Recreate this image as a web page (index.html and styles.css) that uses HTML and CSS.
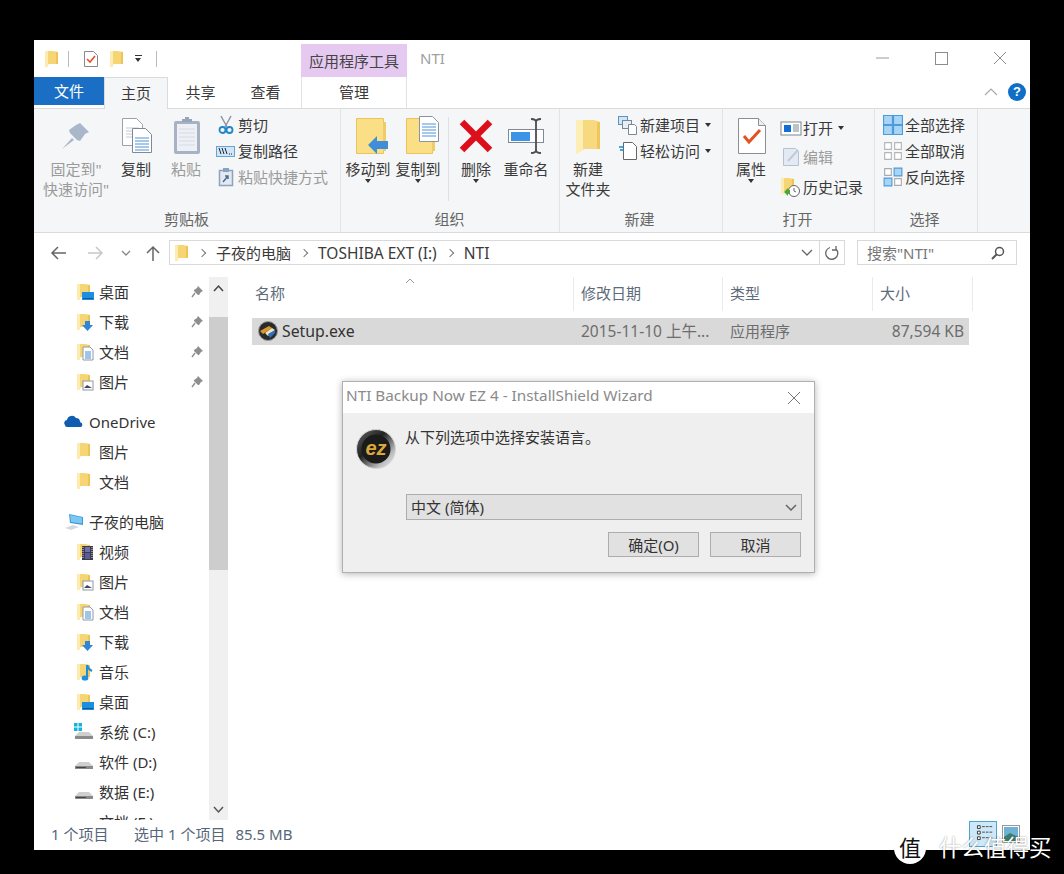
FILE: index.html
```html
<!DOCTYPE html>
<html lang="zh-CN">
<head>
<meta charset="utf-8">
<title>NTI</title>
<link rel="stylesheet" href="styles.css">
</head>
<body>
<svg class="defs" aria-hidden="true">
  <symbol id="fold" viewBox="0 0 13 18"><path d="M0 1h8l5 1v12H4l-4 3z" fill="#f6d674"/><path d="M0 1h3v16H0z" fill="#fdebb0"/><path d="M11 2h2v12h-2z" fill="#eec458"/></symbol>
  <symbol id="n-desk" viewBox="0 0 20 20"><use href="#fold" width="13" height="18" y="1"/><rect x="5" y="10" width="12" height="8" fill="#1d8fe1"/><rect x="6" y="16" width="10" height="1" fill="#0a5a98"/></symbol>
  <symbol id="n-down" viewBox="0 0 20 20"><use href="#fold" width="13" height="18" y="1"/><path d="M8 9h5v4h3l-5.500 6L5 13h3z" fill="#2f86d8"/></symbol>
  <symbol id="n-doc" viewBox="0 0 20 20"><use href="#fold" width="13" height="18" y="1"/><path d="M6 5h7l3 3v10H6z" fill="#fff" stroke="#8f99a6"/><path d="M8 10h6M8 12h6M8 14h6M8 16h6" stroke="#3f8bd0"/></symbol>
  <symbol id="n-pic" viewBox="0 0 20 20"><use href="#fold" width="13" height="18" y="1"/><rect x="6" y="9" width="10" height="9" fill="#fff" stroke="#8f99a6"/><path d="M7 16l3-3 5 3z" fill="#446"/></symbol>
  <symbol id="n-vid" viewBox="0 0 20 20"><use href="#fold" width="13" height="18" y="1"/><rect x="5" y="4" width="11" height="14" fill="#3b3b46"/><rect x="8" y="5" width="5" height="5" fill="#6f6fb0"/><rect x="8" y="11" width="5" height="6" fill="#5a5aa0"/><path d="M6 5v12M15 5v12" stroke="#ddd" stroke-dasharray="1 1"/></symbol>
  <symbol id="n-mus" viewBox="0 0 20 20"><use href="#fold" width="13" height="18" y="1"/><path d="M10 3v13" stroke="#1b8ee0" stroke-width="2"/><path d="M10 3q1 4 5 6" stroke="#1b8ee0" stroke-width="2" fill="none"/><ellipse cx="8" cy="16" rx="3.400" ry="2.600" fill="#1b8ee0"/></symbol>
  <symbol id="pin" viewBox="0 0 12 12"><path d="M7 0l5 5-2 1-2 3-1 0-4-4 0-1 3-2z" fill="#8e8e8e"/><path d="M1 11l3-4" stroke="#8e8e8e" stroke-width="1.400"/></symbol>
  <symbol id="drive" viewBox="0 0 20 20"><path d="M5 10h10l4 4v3H1v-3z" fill="#cfcfcf"/><path d="M1 14h18v3H1z" fill="#8a8a8a"/><path d="M2 15h10v1H2z" fill="#444"/></symbol>
</svg>

<div class="window">
  <header class="titlebar">
    <div class="qat">
      <svg class="qi"><use href="#fold"/></svg>
      <span class="qsep"></span>
      <svg class="qdoc" viewBox="0 0 14 16"><path d="M.5.5h9l4 4v11H.5z" fill="#fff" stroke="#888"/><path d="M3 8l3 3 5-6" fill="none" stroke="#e0502a" stroke-width="1.600"/></svg>
      <svg class="qi q2"><use href="#fold"/></svg>
      <span class="qdrop"></span>
      <span class="qsep q3"></span>
    </div>
    <div class="ctx-tab">应用程序工具</div>
    <div class="win-title">NTI</div>
    <div class="caption">
      <svg class="cap" viewBox="0 0 58 36"><path d="M21 18h13" stroke="#9a9a9a"/></svg>
      <svg class="cap" viewBox="0 0 58 36"><rect x="22.500" y="12.500" width="12" height="12" fill="none" stroke="#8c8c8c"/></svg>
      <svg class="cap" viewBox="0 0 58 36"><path d="M23 12l12 12M35 12L23 24" stroke="#8c8c8c"/></svg>
    </div>
  </header>

  <nav class="tabs">
    <div class="tab tab-file">文件</div>
    <div class="tab tab-home">主页</div>
    <div class="tab">共享</div>
    <div class="tab">查看</div>
    <div class="tab tab-manage">管理</div>
    <div class="tabs-right">
      <svg class="collapse" viewBox="0 0 14 8"><path d="M1 7l6-6 6 6" fill="none" stroke="#a8a8a8" stroke-width="1.200"/></svg>
      <div class="help">?</div>
    </div>
  </nav>

  <section class="ribbon">
    <div class="group g-clip">
      <div class="group-body">
        <div class="big wide dis">
          <svg class="big-icon" viewBox="0 0 44 42"><path d="M26 9l9 9-4 2-5 7-3-1-7-7-1-3 7-5z" fill="#aab7cb"/><path d="M8 35l10-11 2 2z" fill="#aab7cb"/></svg>
          <div class="lbl">固定到"<br>快速访问"</div>
        </div>
        <div class="big">
          <svg class="big-icon" viewBox="0 0 44 42"><path d="M8.500 4.500h14l6 6v21h-20z" fill="#fff" stroke="#9aa3ad"/><path d="M12 14h13M12 17h13M12 20h13M12 23h13" stroke="#c4cbd3"/><path d="M18.500 14.500h13l6 6v18h-19z" fill="#fff" stroke="#7f8a96"/><path d="M21 24h14M21 27h14M21 30h14M21 33h14M21 36h14" stroke="#4f94d4"/></svg>
          <div class="lbl">复制</div>
        </div>
        <div class="big dis">
          <svg class="big-icon" viewBox="0 0 44 42"><rect x="10" y="7" width="26" height="33" rx="2" fill="#a7b3c5"/><rect x="13" y="10" width="20" height="27" fill="#edf0f5"/><path d="M15 15h16M15 19h16M15 23h16M15 27h16M15 31h16" stroke="#d5dbe4"/><path d="M18 8h10V5h-3V3h-4v2h-3z" fill="#97a5ba"/></svg>
          <div class="lbl">粘贴</div>
        </div>
        <div class="smalls s-clip">
          <div class="sm"><svg class="si" viewBox="0 0 20 20"><path d="M5 1l6 11M15 1L9 12" stroke="#8a97a5" stroke-width="1.500"/><circle cx="6.500" cy="15" r="3" fill="none" stroke="#1f86c9" stroke-width="1.800"/><circle cx="13.500" cy="15" r="3" fill="none" stroke="#1f86c9" stroke-width="1.800"/></svg><span>剪切</span></div>
          <div class="sm"><svg class="si" viewBox="0 0 20 20"><rect x=".5" y="5.500" width="18" height="10" fill="#cfe6f8" stroke="#6aa3d0"/><path d="M3 7l2 6M6 7l2 6M9 7l2 6" stroke="#223" stroke-width="1"/><path d="M13 13h4" stroke="#223" stroke-dasharray="1 1"/></svg><span>复制路径</span></div>
          <div class="sm dis"><svg class="si" viewBox="0 0 20 20"><rect x="3.500" y="3.500" width="13" height="15" fill="#e4e9f0" stroke="#8ba3bf" stroke-width="1.500"/><rect x="7" y="1" width="6" height="4" fill="#8ba3bf"/><path d="M7 15l5-6M9 9h3v3" stroke="#4d6d93" stroke-width="1.500" fill="none"/></svg><span>粘贴快捷方式</span></div>
        </div>
      </div>
      <div class="group-lbl">剪贴板</div>
    </div>

    <div class="group g-org">
      <div class="group-body">
        <div class="big">
          <svg class="big-icon" viewBox="0 0 44 42"><path d="M10.500 4.500h27v35h-27z" fill="#fbdf87" stroke="#e9c45e"/><path d="M37 8h3v29h-3z" fill="#f0cc66"/><path d="M22 31l9-9v5h11v8H31v5z" fill="#3f8fd8"/></svg>
          <div class="lbl">移动到</div><span class="drop"></span>
        </div>
        <div class="big">
          <svg class="big-icon" viewBox="0 0 44 42"><path d="M10.500 4.500h26v35h-26z" fill="#fbdf87" stroke="#e9c45e"/><path d="M36 8h3v29h-3z" fill="#f0cc66"/><path d="M23.500 2.500h13l6 6v19h-19z" fill="#fff" stroke="#8a94a0"/><path d="M26 10h14M26 13h14M26 16h14M26 19h14M26 22h14" stroke="#4f94d4"/></svg>
          <div class="lbl">复制到</div><span class="drop"></span>
        </div>
        <span class="vsep"></span>
        <div class="big">
          <svg class="big-icon" viewBox="0 0 44 42"><path d="M8 8l28 28M36 8L8 36" stroke="#dd0f1b" stroke-width="6.500"/></svg>
          <div class="lbl">删除</div><span class="drop"></span>
        </div>
        <div class="big">
          <svg class="big-icon" viewBox="0 0 44 42"><rect x="4.500" y="15.500" width="35" height="13" fill="#fff" stroke="#7f8a96"/><rect x="7" y="18" width="19" height="9" fill="#3c94e6"/><path d="M32 7v30M27 5q5 0 5 3q0-3 5-3M27 39q5 0 5-3q0 3 5 3" fill="none" stroke="#4d4d4d" stroke-width="1.800"/></svg>
          <div class="lbl">重命名</div>
        </div>
      </div>
      <div class="group-lbl">组织</div>
    </div>

    <div class="group g-new">
      <div class="group-body">
        <div class="big">
          <svg class="big-icon" viewBox="0 0 44 42"><path d="M10 6h18l6 2v27H18l-8 5z" fill="#f7d97f"/><path d="M10 6h7v30l-7 4z" fill="#fdeeb6"/><path d="M31 8h3v27h-3z" fill="#eec65c"/></svg>
          <div class="lbl">新建<br>文件夹</div>
        </div>
        <div class="smalls s-new">
          <div class="sm"><svg class="si" viewBox="0 0 20 20"><rect x=".5" y="1.500" width="9" height="8" fill="#cfe6f8" stroke="#5d93bf"/><rect x="4.500" y="5.500" width="9" height="8" fill="#e8eef5" stroke="#7a8794"/><path d="M10.500 9.500h6l2 2v8h-8z" fill="#fff" stroke="#7a8794"/></svg><span>新建项目</span><span class="drop-i"></span></div>
          <div class="sm"><svg class="si" viewBox="0 0 20 20"><path d="M5.500 1.500h9l4 4v13h-13z" fill="#fff" stroke="#666"/><path d="M1 6h5M2 9h4" stroke="#1f86c9" stroke-width="1.400"/></svg><span>轻松访问</span><span class="drop-i"></span></div>
        </div>
      </div>
      <div class="group-lbl">新建</div>
    </div>

    <div class="group g-open">
      <div class="group-body">
        <div class="big">
          <svg class="big-icon" viewBox="0 0 44 42"><path d="M9.500 4.500h20l7 7v28h-27z" fill="#fff" stroke="#8a8f96"/><path d="M29.500 4.500v7h7" fill="#eee" stroke="#8a8f96"/><path d="M15 22l5 6 11-12" fill="none" stroke="#e2531f" stroke-width="3"/></svg>
          <div class="lbl">属性</div><span class="drop"></span>
        </div>
        <div class="smalls s-open">
          <div class="sm"><svg class="si w22" viewBox="0 0 22 20"><rect x="1" y="4" width="20" height="13" fill="#fff" stroke="#7a8794"/><rect x="4" y="7" width="7" height="7" fill="#0f6fd6"/><path d="M13 7h6M13 9h6M13 11h6M13 13h6" stroke="#7a8794"/></svg><span>打开</span><span class="drop-i"></span></div>
          <div class="sm dis"><svg class="si w22" viewBox="0 0 22 20"><path d="M3.500 1.500h12l3 3v14h-15z" fill="#e3eaf3" stroke="#b4c2d3"/><path d="M8 14L18 3" stroke="#c0cbd9" stroke-width="2"/></svg><span>编辑</span></div>
          <div class="sm"><svg class="si w22" viewBox="0 0 22 20"><use href="#fold" width="13" height="18" x="1"/><circle cx="14" cy="14" r="5.500" fill="#fff" stroke="#666"/><path d="M14 11v3l2 1" stroke="#666" fill="none"/><path d="M4 15l4-4v2h2v4H8v2z" fill="#4ca82e"/></svg><span>历史记录</span></div>
        </div>
      </div>
      <div class="group-lbl">打开</div>
    </div>

    <div class="group g-sel">
      <div class="group-body">
        <div class="smalls s-sel">
          <div class="sm"><svg class="si" viewBox="0 0 18 18"><path d="M0 0h18v18H0z" fill="#4f9ad8"/><path d="M1 1h7v7H1zM10 1h7v7h-7zM1 10h7v7H1zM10 10h7v7h-7z" fill="#a8d4f5"/></svg><span>全部选择</span></div>
          <div class="sm"><svg class="si" viewBox="0 0 18 18"><path d="M1.500 1.500h6v6h-6zM10.500 1.500h6v6h-6zM1.500 10.500h6v6h-6zM10.500 10.500h6v6h-6z" fill="#fff" stroke="#b5b5b5"/></svg><span>全部取消</span></div>
          <div class="sm"><svg class="si" viewBox="0 0 18 18"><path d="M1.500 1.500h6v6h-6zM10.500 10.500h6v6h-6z" fill="#fff" stroke="#aaa"/><path d="M10 1h7v7h-7zM1 10h7v7H1z" fill="#a8d4f5" stroke="#4f9ad8"/></svg><span>反向选择</span></div>
        </div>
      </div>
      <div class="group-lbl">选择</div>
    </div>
  </section>

  <div class="addrbar">
    <svg class="nav-b back" viewBox="0 0 16 14"><path d="M16 7H2M8 1L2 7l6 6" fill="none" stroke="#666" stroke-width="1.500"/></svg>
    <svg class="nav-b fwd" viewBox="0 0 16 14"><path d="M0 7h14M8 1l6 6-6 6" fill="none" stroke="#c8c8c8" stroke-width="1.500"/></svg>
    <svg class="nav-d" viewBox="0 0 10 6"><path d="M1 1l4 4 4-4" fill="none" stroke="#888" stroke-width="1.300"/></svg>
    <svg class="nav-u" viewBox="0 0 14 16"><path d="M7 16V2M1 8l6-6 6 6" fill="none" stroke="#666" stroke-width="1.500"/></svg>
    <div class="addr">
      <svg class="crumb-fold"><use href="#fold"/></svg>
      <span class="chev"></span><span class="crumb">子夜的电脑</span>
      <span class="chev"></span><span class="crumb latin">TOSHIBA EXT (I:)</span>
      <span class="chev"></span><span class="crumb latin">NTI</span>
      <svg class="addr-drop" viewBox="0 0 12 7"><path d="M1 1l5 5 5-5" fill="none" stroke="#666" stroke-width="1.300"/></svg>
      <div class="refresh"><svg viewBox="0 0 16 16"><path d="M6 2.500A6 6 0 1 0 12 4M12 1v4H8" fill="none" stroke="#666" stroke-width="1.300"/></svg></div>
    </div>
    <div class="search">
      <span>搜索"NTI"</span>
      <svg viewBox="0 0 14 14"><circle cx="8.500" cy="5.500" r="4" fill="none" stroke="#555" stroke-width="1.500"/><path d="M6 8l-5 5" stroke="#555" stroke-width="2"/></svg>
    </div>
  </div>

  <div class="main">
    <aside class="side">
      <div class="nav">
        <div class="row"><svg class="ni"><use href="#n-desk"/></svg><span>桌面</span><svg class="pin"><use href="#pin"/></svg></div>
        <div class="row"><svg class="ni"><use href="#n-down"/></svg><span>下载</span><svg class="pin"><use href="#pin"/></svg></div>
        <div class="row"><svg class="ni"><use href="#n-doc"/></svg><span>文档</span><svg class="pin"><use href="#pin"/></svg></div>
        <div class="row"><svg class="ni"><use href="#n-pic"/></svg><span>图片</span><svg class="pin"><use href="#pin"/></svg></div>
        <div class="row top root"><svg class="ri" viewBox="0 0 20 20"><path d="M1 13a3 3 0 0 1 2-5 5 5 0 0 1 9-2 4 4 0 0 1 4 4 3 3 0 0 1 2 4 2 2 0 0 1-2 1H3a2 2 0 0 1-2-2z" fill="#0f5cb0"/></svg><span>OneDrive</span></div>
        <div class="row"><svg class="ni"><use href="#fold" width="13" height="18"/></svg><span>图片</span></div>
        <div class="row"><svg class="ni"><use href="#fold" width="13" height="18"/></svg><span>文档</span></div>
        <div class="row top root"><svg class="ri" viewBox="0 0 20 20"><path d="M5 2l14 3v8L6 11z" fill="#3a9bd9"/><path d="M6 3l12 2.500v6L7 10z" fill="#7cc6f2"/><path d="M1 16l8-3 6 2-8 3z" fill="#d5d8dc"/></svg><span>子夜的电脑</span></div>
        <div class="row"><svg class="ni"><use href="#n-vid"/></svg><span>视频</span></div>
        <div class="row"><svg class="ni"><use href="#n-pic"/></svg><span>图片</span></div>
        <div class="row"><svg class="ni"><use href="#n-doc"/></svg><span>文档</span></div>
        <div class="row"><svg class="ni"><use href="#n-down"/></svg><span>下载</span></div>
        <div class="row"><svg class="ni"><use href="#n-mus"/></svg><span>音乐</span></div>
        <div class="row"><svg class="ni"><use href="#n-desk"/></svg><span>桌面</span></div>
        <div class="row drv"><svg class="di" viewBox="0 0 20 20"><path d="M5 10h10l4 4v3H1v-3z" fill="#cfcfcf"/><path d="M1 14h18v3H1z" fill="#8a8a8a"/><path d="M0 1h3.500v3.500H0zM4.500 1H8v3.500H4.500zM0 5.500h3.500V9H0zM4.500 5.500H8V9H4.500z" fill="#12b3dd"/></svg><span>系统 (C:)</span></div>
        <div class="row drv"><svg class="di"><use href="#drive"/></svg><span>软件 (D:)</span></div>
        <div class="row drv"><svg class="di"><use href="#drive"/></svg><span>数据 (E:)</span></div>
        <div class="row drv"><svg class="di"><use href="#drive"/></svg><span>文档 (F:)</span></div>
      </div>
      <div class="vscroll">
        <svg class="sb-btn" viewBox="0 0 19 40"><path d="M5 14l4.500-5 4.500 5" fill="none" stroke="#444" stroke-width="1.500"/></svg>
        <div class="thumb"></div>
        <svg class="sb-btn2" viewBox="0 0 19 24"><path d="M5 11l4.500 5 4.500-5" fill="none" stroke="#555" stroke-width="1.500"/></svg>
      </div>
    </aside>
    <section class="list">
      <div class="cols">
        <div class="col c-name">名称<svg class="sort" viewBox="0 0 10 6"><path d="M1 5l4-4 4 4" fill="none" stroke="#999"/></svg></div>
        <div class="col c-date">修改日期</div>
        <div class="col c-type">类型</div>
        <div class="col c-size">大小</div>
      </div>
      <div class="file">
        <div class="f-name">
          <svg class="f-icon" viewBox="0 0 20 20"><circle cx="10" cy="10" r="9.500" fill="#2a2a2a" stroke="#999"/><path d="M2 10l9-5 3 2-9 6z" fill="#d79a2b"/><path d="M7 12l7-5 3 2-7 6z" fill="#f1e3c0"/><path d="M10 13l7-4v3l-5 5z" fill="#2c6fc0"/></svg>
          <span class="latin-f">Setup.exe</span>
        </div>
        <div class="f-date">2015-11-10 上午...</div>
        <div class="f-type">应用程序</div>
        <div class="f-size">87,594 KB</div>
      </div>
    </section>
  </div>

  <footer class="status">
    <span class="st1">1 个项目</span>
    <span class="st2">选中 1 个项目</span>
    <span class="st3">85.5 MB</span>
    <div class="views">
      <div class="v-det"><svg viewBox="0 0 28 26"><path d="M8 4h3v3H8zM8 10h3v3H8zM8 16h3v3H8z" fill="#fff" stroke="#333"/><path d="M13 5h11M13 11h11M13 17h11" stroke="#444" stroke-dasharray="3 1"/></svg></div>
      <svg class="v-lrg" viewBox="0 0 18 18"><rect x=".5" y=".5" width="17" height="17" fill="#fff" stroke="#999"/><rect x="2" y="2" width="14" height="14" fill="#6fb2d8"/><path d="M2 12l6-4 8 4v4H2z" fill="#3d7f6a"/></svg>
    </div>
  </footer>
</div>

<div class="dialog">
  <div class="dlg-title">
    <span>NTI Backup Now EZ 4 - InstallShield Wizard</span>
    <svg viewBox="0 0 12 12"><path d="M0 0l12 12M12 0L0 12" stroke="#777"/></svg>
  </div>
  <div class="dlg-body">
    <div class="dlg-msg">
      <svg class="ez" viewBox="0 0 40 40">
        <defs><linearGradient id="ring" x1="0" y1="0" x2="1" y2="1"><stop offset="0" stop-color="#666"/><stop offset=".4" stop-color="#222"/><stop offset=".75" stop-color="#bbb"/><stop offset="1" stop-color="#f2f2f2"/></linearGradient></defs>
        <circle cx="20" cy="20" r="19.500" fill="url(#ring)" stroke="#d5d5d5"/>
        <circle cx="20" cy="20" r="14.500" fill="#1b1b1b"/>
        <text x="20" y="26" class="ez-t">ez</text>
      </svg>
      <p>从下列选项中选择安装语言。</p>
    </div>
    <div class="dlg-select">
      <span>中文 (简体)</span>
      <svg viewBox="0 0 12 7"><path d="M1 1l5 5 5-5" fill="none" stroke="#666" stroke-width="1.500"/></svg>
    </div>
    <div class="dlg-btns">
      <div class="btn">确定(O)</div>
      <div class="btn">取消</div>
    </div>
  </div>
</div>

<div class="wm">
  <div class="wm-c">值</div>
  <div class="wm-t">什么值得买</div>
</div>
</body>
</html>
```

FILE: styles.css
```css
* { box-sizing: border-box; }
html, body { margin: 0; height: 874px; overflow: hidden; background: #000; }
body { font: 15px/20px "Noto Sans", "Noto Sans CJK SC", sans-serif; color: #3a3a3a; position: relative; }
.defs { position: absolute; width: 0; height: 0; }

.window { width: 996px; height: 810px; margin: 40px 0 0 34px; background: #fff; display: flex; flex-direction: column; overflow: hidden; }

/* title bar */
.titlebar { height: 37px; display: flex; flex: none; }
.qat { width: 267px; display: flex; align-items: center; padding: 0 0 0 11px; }
.qi { width: 13px; height: 18px; }
.q2 { margin-left: 12px; }
.qsep { width: 1px; height: 16px; background: #bbb; margin-left: 10px; }
.q3 { margin-left: 14px; }
.qdoc { width: 14px; height: 16px; margin-left: 15px; }
.qdrop { width: 7px; height: 7px; margin-left: 12px; border-top: 1px solid #333; position: relative; }
.qdrop::after { content: ""; position: absolute; left: 0; top: 2px; border: 3.5px solid transparent; border-top: 4px solid #333; border-bottom: 0; }
.ctx-tab { width: 106px; margin-top: 4px; background: #e5c9f1; text-align: center; line-height: 34px; color: #444; }
.win-title { margin-left: 13px; line-height: 36px; color: #a0a0a0; font-size: 15px; }
.caption { margin-left: auto; display: flex; padding-right: 1px; }
.cap { width: 58px; height: 36px; }

/* tabs */
.tabs { height: 32px; flex: none; display: flex; border-bottom: 1px solid #dadbdc; }
.tab { width: 65px; text-align: center; line-height: 30px; }
.tab-file { width: 70px; height: 28px; line-height: 28px; background: #1a6fc4; color: #fff; }
.tab-home { width: 64px; height: 32px; background: #f5f6f7; border: 1px solid #dadbdc; border-bottom: 0; }
.tab-manage { width: 106px; margin-left: 3px; border-left: 1px solid #e2e2e2; border-right: 1px solid #e2e2e2; }
.tabs-right { margin-left: auto; display: flex; align-items: center; padding: 0 4px 2px 0; }
.collapse { width: 14px; height: 8px; margin-right: 10px; }
.help { width: 18px; height: 18px; border-radius: 50%; background: #0f6fc6; color: #fff; font: bold 13px/18px "Liberation Sans", sans-serif; text-align: center; }

/* ribbon */
.ribbon { height: 124px; flex: none; display: flex; background: #f5f6f7; border-bottom: 1px solid #dadbdc; }
.group { display: flex; flex-direction: column; border-right: 1px solid #e2e3e4; }
.g-clip { width: 307px; padding-left: 7px; }
.g-org { width: 219px; padding-left: 2px; }
.g-new { width: 163px; padding-left: 3px; }
.g-open { width: 152px; padding-left: 3px; }
.g-sel { width: 103px; padding-left: 8px; }
.group-body { flex: 1; display: flex; padding-top: 4px; }
.group-lbl { height: 25px; line-height: 24px; text-align: center; color: #666; }
.g-clip .group-lbl { margin-right: 8px; }
.g-org .group-lbl { margin-right: 3px; }
.g-new .group-lbl { margin-right: 6px; }
.g-open .group-lbl { margin-right: 5px; }
.g-sel .group-lbl { margin-right: 11px; }
.big { width: 50px; text-align: center; display: flex; flex-direction: column; align-items: center; }
.wide { width: 70px; }
.big-icon { width: 44px; height: 42px; margin: 1px 0 3px; flex: none; }
.lbl { line-height: 20px; white-space: nowrap; }
.dis, .dis .lbl { color: #9b9b9b; }
.drop { width: 0; height: 0; border: 3.5px solid transparent; border-top: 4px solid #333; border-bottom: 0; margin-top: 0; }
.vsep { width: 1px; height: 84px; background: #dfe0e1; margin: 4px 2px 0 5px; }
.smalls { display: flex; flex-direction: column; margin-top: -1px; }
.s-clip { margin-left: 5px; }
.s-new { margin-left: 5px; }
.s-open { margin: 0 0 0 4px; }
.sm { height: 26px; display: flex; align-items: center; white-space: nowrap; }
.s-open .sm { height: 29.500px; }
.si { width: 20px; height: 20px; margin-right: 2px; flex: none; }
.w22 { width: 22px; margin-right: 1px; }
.drop-i { width: 0; height: 0; border: 3.5px solid transparent; border-top: 4px solid #333; border-bottom: 0; margin-left: 5px; }

/* address bar */
.addrbar { height: 39px; flex: none; display: flex; align-items: center; padding: 0 13px 0 16px; }
.nav-b { width: 16px; height: 14px; }
.fwd { margin-left: 22px; }
.nav-d { width: 10px; height: 6px; margin-left: 17px; }
.nav-u { width: 14px; height: 16px; margin-left: 15px; }
.addr { width: 676px; height: 25px; margin-left: 9px; border: 1px solid #d9d9d9; display: flex; align-items: center; padding-left: 5px; }
.crumb-fold { width: 13px; height: 18px; }
.crumb { margin-left: 11px; }
.latin { font-size: 15.500px; }
.latin-f { font-size: 15.800px; }
.chev { width: 6px; height: 6px; border-top: 1.200px solid #777; border-right: 1.200px solid #777; transform: rotate(45deg); margin-left: 11px; }
.crumb + .chev { margin-left: 10px; }
.addr-drop { width: 12px; height: 7px; margin-left: auto; }
.refresh { width: 25px; height: 23px; margin-left: 6px; border-left: 1px solid #d9d9d9; display: flex; align-items: center; justify-content: center; }
.refresh svg { width: 16px; height: 16px; }
.search { width: 160px; height: 25px; margin-left: 12px; border: 1px solid #d9d9d9; display: flex; align-items: center; justify-content: space-between; padding: 0 11px 0 9px; color: #777; }
.search svg { width: 14px; height: 14px; }

/* main */
.main { flex: 1; min-height: 0; display: flex; padding-top: 5px; }
.side { width: 194px; display: flex; flex: none; }
.nav { width: 175px; overflow: hidden; }
.row { height: 30px; display: flex; align-items: center; padding: 0 0 1px 43px; position: relative; color: #333; white-space: nowrap; }
.top { margin-top: 10px; }
.root { padding-left: 30px; }
.ni { width: 20px; height: 20px; margin-right: 2px; flex: none; }
.ri { width: 20px; height: 20px; margin-right: 5px; flex: none; }
.drv { padding-left: 40px; }
.di { width: 20px; height: 20px; margin-right: 5px; flex: none; }
.pin { width: 12px; height: 12px; position: absolute; left: 157px; top: 9px; }
.vscroll { width: 19px; background: #f0f0f0; display: flex; flex-direction: column; }
.sb-btn { width: 19px; height: 40px; flex: none; }
.thumb { height: 253px; background: #cdcdcd; flex: none; }
.sb-btn2 { width: 19px; height: 24px; margin-top: auto; }

.list { flex: 1; padding: 0 0 0 24px; min-width: 0; }
.cols { display: flex; height: 41px; color: #5d6b7a; }
.col { height: 34px; line-height: 33px; padding-left: 7px; border-right: 1px solid #eaeaea; }
.c-name { width: 322px; padding-left: 3px; position: relative; }
.c-date { width: 149px; }
.c-type { width: 150px; }
.c-size { width: 100px; }
.sort { position: absolute; left: 153px; top: 1px; width: 10px; height: 6px; }
.file { width: 717px; height: 27px; background: #d9d9d9; display: flex; align-items: center; padding-bottom: 2px; color: #6d6d6d; }
.f-name { width: 322px; display: flex; align-items: center; padding-left: 6px; color: #333; }
.f-icon { width: 20px; height: 20px; margin-right: 4px; }
.f-date { width: 149px; padding-left: 7px; white-space: nowrap; font-size: 15.500px; }
.f-type { width: 150px; padding-left: 7px; }
.f-size { width: 91px; text-align: right; font-size: 15.500px; }

/* status */
.status { height: 30px; flex: none; display: flex; align-items: center; padding: 0 10px 2px 17px; color: #56677a; position: relative; }
.st1 { width: 83px; }
.st2 { margin-right: 10px; }
.views { margin-left: auto; display: flex; align-items: center; }
.v-det { width: 28px; height: 26px; background: #cde8f8; border: 1px solid #4ea6d0; }
.v-det svg { width: 26px; height: 24px; display: block; }
.v-lrg { width: 18px; height: 18px; margin-left: 5px; }

/* dialog */
.dialog { position: absolute; left: 342px; top: 381px; width: 473px; height: 192px; background: #efefef; border: 1px solid #b0b0b0; box-shadow: 0 1px 7px rgba(0, 0, 0, .3); display: flex; flex-direction: column; }
.dlg-title { height: 31px; background: #fff; flex: none; display: flex; align-items: center; justify-content: space-between; padding: 0 14px 6px 3px; color: #8a8a8a; font-size: 15.300px; }
.dlg-title svg { width: 12px; height: 12px; margin-top: 6px; }
.dlg-body { flex: 1; padding: 14px 12px 0 14px; }
.dlg-msg { display: flex; height: 67px; }
.ez { width: 40px; height: 40px; margin: 2px 0 0 -1px; flex: none; }
.ez-t { font: italic bold 20px "Liberation Sans", sans-serif; fill: #d9a93a; text-anchor: middle; }
.dlg-msg p { margin: 0 0 0 9px; line-height: 20px; color: #333; }
.dlg-select { margin-left: 49px; height: 26px; background: #e1e1e1; border: 1px solid #adadad; display: flex; align-items: center; justify-content: space-between; padding: 0 4px; color: #333; }
.dlg-select svg { width: 12px; height: 7px; }
.dlg-btns { display: flex; justify-content: flex-end; gap: 11px; margin-top: 12px; padding-right: 1px; }
.btn { width: 91px; height: 25px; background: #e1e1e1; border: 1px solid #adadad; text-align: center; line-height: 25px; color: #333; }

/* watermark */
.wm { position: absolute; left: 894px; top: 832px; display: flex; align-items: center; }
.wm-c { width: 32px; height: 32px; border-radius: 50%; background: #fff; color: #111; text-align: center; font-size: 22px; line-height: 31px; }
.wm-t { margin-left: 13px; color: #fff; font-size: 22.500px; line-height: 32px; white-space: nowrap; text-shadow: 0 0 2px rgba(0, 0, 0, .45); }
```
